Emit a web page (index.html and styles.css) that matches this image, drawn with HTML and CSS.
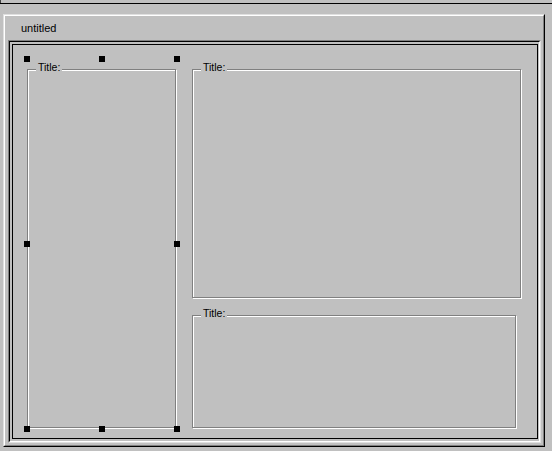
FILE: index.html
```html
<!DOCTYPE html>
<html>
<head>
<meta charset="utf-8">
<link rel="stylesheet" href="styles.css">
</head>
<body>
<div class="topstrip"></div>
<div class="window">
  <div class="raised">
    <div class="raised-in">
      <div class="tab-label">untitled</div>
      <div class="sunken">
        <div class="sunken-in">
          <div class="form">
            <div class="comp comp-left selected">
              <div class="group group-left"><span class="legend">Title:</span></div>
              <span class="handle h-tl"></span>
              <span class="handle h-tm"></span>
              <span class="handle h-tr"></span>
              <span class="handle h-ml"></span>
              <span class="handle h-mr"></span>
              <span class="handle h-bl"></span>
              <span class="handle h-bm"></span>
              <span class="handle h-br"></span>
            </div>
            <div class="col-right">
              <div class="comp">
                <div class="group group-top"><span class="legend">Title:</span></div>
              </div>
              <div class="comp comp-bottom">
                <div class="group group-bottom"><span class="legend">Title:</span></div>
              </div>
            </div>
          </div>
        </div>
      </div>
    </div>
  </div>
</div>
</body>
</html>
```
FILE: styles.css
```css
html, body {
  margin: 0;
  padding: 0;
}
body {
  background: #c0c0c0;
  width: 552px;
  height: 451px;
  overflow: hidden;
  font-family: "Liberation Sans", Arial, sans-serif;
  color: #000;
}
.topstrip {
  height: 3px;
  width: 0;
  border-left: 1px solid #404040;
}
.window {
  border-top: 1px solid #000;
  padding: 10px 7px 0 3px;
}
.raised {
  width: 542px;
  height: 433px;
  box-sizing: border-box;
  border: 1px solid;
  border-color: #dfdfdf #000 #000 #dfdfdf;
}
.raised-in {
  height: 100%;
  box-sizing: border-box;
  border: 1px solid;
  border-color: #fff #808080 #808080 #fff;
  display: flex;
  flex-direction: column;
}
.tab-label {
  height: 24px;
  box-sizing: border-box;
  padding: 6px 0 0 16px;
  font-size: 11px;
  line-height: 13px;
}
.sunken {
  margin: 0 2px 2px 3px;
  height: 403px;
  box-sizing: border-box;
  border: 1px solid;
  border-color: #808080 #dfdfdf #dfdfdf #808080;
}
.sunken-in {
  height: 100%;
  box-sizing: border-box;
  border: 1px solid;
  border-color: #000 #fff #fff #000;
  padding: 2px 1px 2px 2px;
  display: flex;
}
.form {
  flex: 1;
  border: 1px solid #000;
  display: flex;
  align-items: flex-start;
  gap: 15px;
  padding: 14px 0 0 14px;
}
.comp {
  position: relative;
  padding-top: 10px;
}
.comp-left {
  width: 150px;
  height: 360px;
}
.comp-bottom {
  margin-top: 7px;
}
.col-right {
  display: flex;
  flex-direction: column;
}
.group {
  position: relative;
  box-sizing: border-box;
  border: 1px solid #808080;
  box-shadow: inset 1px 1px 0 #fff, 1px 1px 0 #fff;
}
.group-left {
  width: 149px;
  height: 359px;
}
.group-top {
  width: 329px;
  height: 229px;
}
.group-bottom {
  width: 324px;
  height: 113px;
}
.legend {
  position: absolute;
  top: -9px;
  left: 8px;
  padding: 0 2px;
  background: #c0c0c0;
  font-size: 10.5px;
  line-height: 12px;
  white-space: nowrap;
}
.handle {
  position: absolute;
  width: 6px;
  height: 6px;
  background: #000;
}
.h-tl { left: -3px; top: -3px; }
.h-tm { left: 72px; top: -3px; }
.h-tr { left: 147px; top: -3px; }
.h-ml { left: -3px; top: 182px; }
.h-mr { left: 147px; top: 182px; }
.h-bl { left: -3px; top: 367px; }
.h-bm { left: 72px; top: 367px; }
.h-br { left: 147px; top: 367px; }
```
